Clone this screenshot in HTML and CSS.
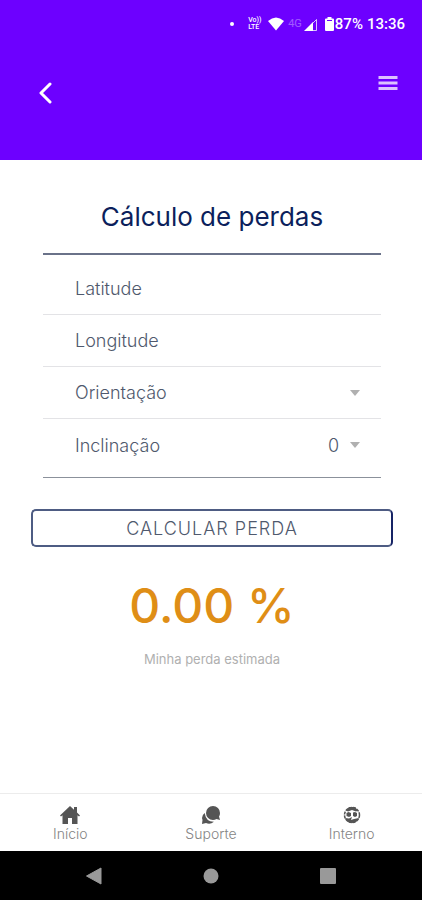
FILE: index.html
```html
<!DOCTYPE html>
<html lang="pt-BR">
<head>
<meta charset="utf-8">
<meta name="viewport" content="width=device-width, initial-scale=1">
<title>Cálculo de perdas</title>
<link rel="stylesheet" href="styles.css">
</head>
<body>
<header class="header">
  <div class="status">
    <span class="dot"></span>
    <span class="volte"><span>Vo))</span><span>LTE</span></span>
    <svg class="wifi" width="16" height="14" viewBox="0 0 16 14" aria-hidden="true"><path fill="#fff" d="M0 4Q8-3 16 4L8 13.500z"/></svg>
    <span class="network">4G</span>
    <svg class="signal" width="13" height="13" viewBox="0 0 13 13" aria-hidden="true"><path fill="#fff" d="M0 13 9 4v9z"/><path fill="none" stroke="#fff" stroke-opacity=".75" d="M2 12.500h10.500V1.500L7 7"/></svg>
    <svg class="battery" width="9" height="14" viewBox="0 0 9 14" aria-hidden="true"><path fill="#fff" d="M2.500 0h4v1.500H8q1 0 1 1V13q0 1-1 1H1q-1 0-1-1V2.500q0-1 1-1h1.500z"/><path fill="#6d00ff" d="M2 3h5v1H2z"/></svg>
    <span class="level">87%</span>
    <time>13:36</time>
  </div>
  <div class="toolbar">
    <button class="icon-button back" type="button" aria-label="Voltar"><svg width="14" height="22" viewBox="0 0 14 22"><path d="M12 2 3 11l9 9" fill="none" stroke="#fff" stroke-width="3" stroke-linecap="round" stroke-linejoin="round"/></svg></button>
    <button class="icon-button menu" type="button" aria-label="Menu"><svg width="20" height="16" viewBox="0 0 20 16"><path d="M.5 2.500h19M.5 8h19M.5 13.500h19" stroke="#dcc2ff" stroke-width="3"/></svg></button>
  </div>
</header>
<main class="content">
  <h1>Cálculo de perdas</h1>
  <form class="form">
    <div class="fields">
      <div class="row"><input type="text" placeholder="Latitude" aria-label="Latitude"></div>
      <div class="row"><input type="text" placeholder="Longitude" aria-label="Longitude"></div>
      <div class="row">
        <label for="orientacao">Orientação</label>
        <select id="orientacao"><option></option><option>Norte</option><option>Sul</option><option>Leste</option><option>Oeste</option></select>
        <svg class="caret" width="10" height="6" viewBox="0 0 10 6" aria-hidden="true"><path d="M0 0h10L5 6z"/></svg>
      </div>
      <div class="row">
        <label for="inclinacao">Inclinação</label>
        <select id="inclinacao"><option>0</option><option>10</option><option>20</option><option>30</option></select>
        <svg class="caret" width="10" height="6" viewBox="0 0 10 6" aria-hidden="true"><path d="M0 0h10L5 6z"/></svg>
      </div>
    </div>
    <button class="submit" type="button">CALCULAR PERDA</button>
  </form>
  <output class="result">0.00 %</output>
  <p class="caption">Minha perda estimada</p>
</main>
<nav class="tabs">
  <a href="#inicio"><svg width="20" height="18" viewBox="0 0 20 18" aria-hidden="true"><path fill="#555" d="M10 0 0 9.500l1 1L2.500 9.300V18H8v-6h4v6h5.500V9.300L19 10.500l1-1-3-3V1h-3v2.800z"/></svg>Início</a>
  <a href="#suporte"><svg width="20" height="18" viewBox="0 0 20 18" aria-hidden="true"><path fill="#555" d="M12 0a7 7 0 1 0 0 14q2 0 3.500-1l3.500 1-1-3.500q1-1.500 1-3.500a7 7 0 0 0-7-7z"/><path fill="#555" d="M3.700 7Q1 9 1 12l.5 2L1 18l4-1q4 2 8-1.200Q5 16 3.700 7z"/></svg>Suporte</a>
  <a href="#interno"><svg width="18" height="18" viewBox="0 0 18 18" aria-hidden="true"><circle cx="9" cy="9" r="7.500" fill="#fff" stroke="#555" stroke-width="1.500" stroke-dasharray="3 1"/><path fill="#555" d="M3 4.500 6 1h6l3 3.500-2 1L9 4 5 5.500zM3.500 7l2-1L8 7v3l-2 1-2.500-1zM10 6.500l2-.5 2 1v3l-2 1-2-1zM2 12l4 .5L9 11l-1 3 3-1 5-1q-2 5-7 5t-7-5z"/></svg>Interno</a>
</nav>
<div class="system">
  <button class="icon-button" type="button" aria-label="Voltar no sistema"><svg width="18" height="20" viewBox="0 0 18 20"><path fill="#999" stroke="#999" stroke-linejoin="round" d="M1.500 10 16 2v16z"/></svg></button>
  <button class="icon-button" type="button" aria-label="Tela inicial"><svg width="18" height="18" viewBox="0 0 18 18"><circle cx="9" cy="9" r="7.500" fill="#999"/></svg></button>
  <button class="icon-button" type="button" aria-label="Aplicativos recentes"><svg width="18" height="18" viewBox="0 0 18 18"><rect x="1" y="1" width="16" height="16" rx="1" fill="#999"/></svg></button>
</div>
</body>
</html>
```
FILE: styles.css
```css
* { box-sizing: border-box; }

body {
  margin: 0;
  min-height: 100vh;
  display: flex;
  flex-direction: column;
  background: #fff;
  color: #4f596d;
  font-family: Inter, "Open Sans", sans-serif;
}

button, input, select { font: inherit; color: inherit; }

.icon-button {
  display: flex;
  padding: 0;
  border: 0;
  background: none;
}

.header {
  height: 160px;
  background: #6d00ff;
  color: #fff;
}

.status {
  display: flex;
  align-items: center;
  justify-content: flex-end;
  height: 48px;
  padding-right: 17px;
  font: 500 15px/16px Roboto, sans-serif;
}

.dot {
  width: 4px;
  height: 4px;
  margin-right: 14px;
  border-radius: 50%;
  background: #fff;
}

.volte {
  display: flex;
  flex-direction: column;
  width: 15px;
  margin-right: 5px;
  font-size: 7px;
  line-height: 7px;
}

.wifi { margin-right: 4px; }
.network { margin-right: 2px; font-size: 11px; font-weight: 400; opacity: .35; }
.signal { margin-right: 8px; }
.battery { margin-right: 1px; }
.level { margin-right: 4px; }

.toolbar {
  display: flex;
  justify-content: space-between;
  padding: 27px 24px 0 38px;
}

.back { padding-top: 7px; }

.content {
  flex: 1;
  display: flex;
  flex-direction: column;
  padding: 41px 29px 24px 31px;
}

h1 {
  margin: 0;
  color: #0c1f5c;
  font-size: 26px;
  font-weight: 400;
  line-height: 32px;
  text-align: center;
}

.form { display: flex; flex-direction: column; }

.fields {
  margin: 20px 12px 31px;
  padding: 8px 0 6px;
  border-top: 2px solid #6a7289;
  border-bottom: 1px solid #8b919b;
}

.row {
  display: flex;
  align-items: center;
  height: 52px;
  padding: 0 21px 0 32px;
  border-bottom: 1px solid #e3e3e6;
  font-size: 18px;
  font-weight: 300;
}

.row:last-child { border-bottom: 0; }

.row input {
  width: 100%;
  padding: 0;
  border: 0;
  background: none;
}

.row input::placeholder { color: inherit; opacity: 1; }
.row label { flex: 1; }

.row select {
  appearance: none;
  min-width: 32px;
  padding: 0;
  border: 0;
  background: none;
  text-align: right;
  text-align-last: right;
}

.caret { margin-left: 11px; fill: #b0b0b0; }

.submit {
  height: 38px;
  padding: 0;
  border: 2px solid #4e5c83;
  border-right-color: #162465;
  border-radius: 5px;
  background: none;
  font-size: 18px;
  font-weight: 300;
  letter-spacing: 1px;
}

.result {
  margin-top: 29px;
  color: #df8e16;
  font-size: 48px;
  font-weight: 500;
  line-height: 60px;
  text-align: center;
}

.caption {
  margin: 14px 0 0;
  color: #b0b0b0;
  font-size: 13px;
  line-height: 18px;
  text-align: center;
}

.tabs {
  display: grid;
  grid-template-columns: repeat(3, 1fr);
  height: 58px;
  border-top: 1px solid #ececec;
}

.tabs a {
  display: flex;
  flex-direction: column;
  align-items: center;
  gap: 2px;
  padding-top: 12px;
  color: #858585;
  font-size: 14px;
  font-weight: 300;
  line-height: 16px;
  text-decoration: none;
}

.system {
  display: grid;
  grid-template-columns: repeat(3, 1fr);
  place-items: center;
  height: 49px;
  padding: 0 36px;
  background: #000;
}
```
